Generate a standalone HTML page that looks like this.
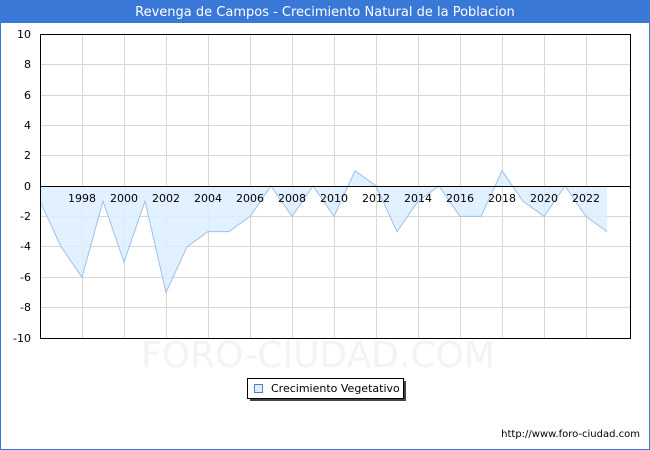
<!DOCTYPE html>
<html><head><meta charset="utf-8"><style>
html,body{margin:0;padding:0;width:650px;height:450px;overflow:hidden;background:#fff;font-family:"Liberation Sans","DejaVu Sans",sans-serif}
</style></head><body>
<svg width="650" height="450" viewBox="0 0 650 450" xmlns="http://www.w3.org/2000/svg" font-family="'DejaVu Sans','Liberation Sans',sans-serif">
<rect x="0.5" y="0.5" width="649" height="449" fill="#fff" stroke="#3a78d8"/>
<rect x="0" y="0" width="650" height="23" fill="#3a78d8"/>
<text x="325" y="16" fill="#fff" font-size="13" text-anchor="middle">Revenga de Campos - Crecimiento Natural de la Poblacion</text>
<text x="318" y="367" fill="#f2f2f8" font-size="36" text-anchor="middle">FORO-CIUDAD.COM</text>
<g stroke="#d8d8d8" stroke-width="1">
<line x1="40" y1="64.5" x2="630" y2="64.5"/><line x1="40" y1="95.5" x2="630" y2="95.5"/><line x1="40" y1="125.5" x2="630" y2="125.5"/><line x1="40" y1="155.5" x2="630" y2="155.5"/>
<line x1="40" y1="216.5" x2="630" y2="216.5"/><line x1="40" y1="246.5" x2="630" y2="246.5"/><line x1="40" y1="277.5" x2="630" y2="277.5"/><line x1="40" y1="307.5" x2="630" y2="307.5"/>
<line x1="82.5" y1="34" x2="82.5" y2="338"/><line x1="124.5" y1="34" x2="124.5" y2="338"/><line x1="166.5" y1="34" x2="166.5" y2="338"/><line x1="208.5" y1="34" x2="208.5" y2="338"/><line x1="250.5" y1="34" x2="250.5" y2="338"/><line x1="292.5" y1="34" x2="292.5" y2="338"/><line x1="334.5" y1="34" x2="334.5" y2="338"/><line x1="376.5" y1="34" x2="376.5" y2="338"/><line x1="418.5" y1="34" x2="418.5" y2="338"/><line x1="460.5" y1="34" x2="460.5" y2="338"/><line x1="502.5" y1="34" x2="502.5" y2="338"/><line x1="544.5" y1="34" x2="544.5" y2="338"/><line x1="586.5" y1="34" x2="586.5" y2="338"/>
</g>
<polygon fill="#ddeeff" fill-opacity="0.85" stroke="none" points="40,186 40,201.2 61,246.8 82,277.2 103,201.2 124,262 145,201.2 166,292.4 187,246.8 208,231.6 229,231.6 250,216.4 271,186 292,216.4 313,186 334,216.4 355,170.8 376,186 397,231.6 418,201.2 439,186 460,216.4 481,216.4 502,170.8 523,201.2 544,216.4 565,186 586,216.4 607,231.6 607,186"/>
<polyline fill="none" stroke="#9ec0ea" stroke-width="1" points="40,201.2 61,246.8 82,277.2 103,201.2 124,262 145,201.2 166,292.4 187,246.8 208,231.6 229,231.6 250,216.4 271,186 292,216.4 313,186 334,216.4 355,170.8 376,186 397,231.6 418,201.2 439,186 460,216.4 481,216.4 502,170.8 523,201.2 544,216.4 565,186 586,216.4 607,231.6"/>
<line x1="40" y1="186.5" x2="630" y2="186.5" stroke="#000"/>
<rect x="40.5" y="34.5" width="590" height="304" fill="none" stroke="#000"/>
<g font-size="11" fill="#000" text-anchor="end">
<text x="31" y="38">10</text><text x="31" y="68">8</text><text x="31" y="99">6</text><text x="31" y="129">4</text><text x="31" y="159">2</text><text x="31" y="190">0</text><text x="31" y="220">-2</text><text x="31" y="250">-4</text><text x="31" y="281">-6</text><text x="31" y="311">-8</text><text x="31" y="342">-10</text>
</g>
<g font-size="11" fill="#000" text-anchor="middle">
<text x="82" y="202">1998</text><text x="124" y="202">2000</text><text x="166" y="202">2002</text><text x="208" y="202">2004</text><text x="250" y="202">2006</text><text x="292" y="202">2008</text><text x="334" y="202">2010</text><text x="376" y="202">2012</text><text x="418" y="202">2014</text><text x="460" y="202">2016</text><text x="502" y="202">2018</text><text x="544" y="202">2020</text><text x="586" y="202">2022</text>
</g>
<rect x="250" y="381" width="156" height="20" fill="#444"/>
<rect x="247.5" y="378.5" width="156" height="20" fill="#fff" stroke="#000"/>
<rect x="254.5" y="384.5" width="8" height="8" fill="#ddeeff" stroke="#5a7fb0"/>
<text x="271" y="392" font-size="11" fill="#000">Crecimiento Vegetativo</text>
<text x="640" y="437" font-size="10" fill="#000" text-anchor="end">http://www.foro-ciudad.com</text>
</svg>
</body></html>
